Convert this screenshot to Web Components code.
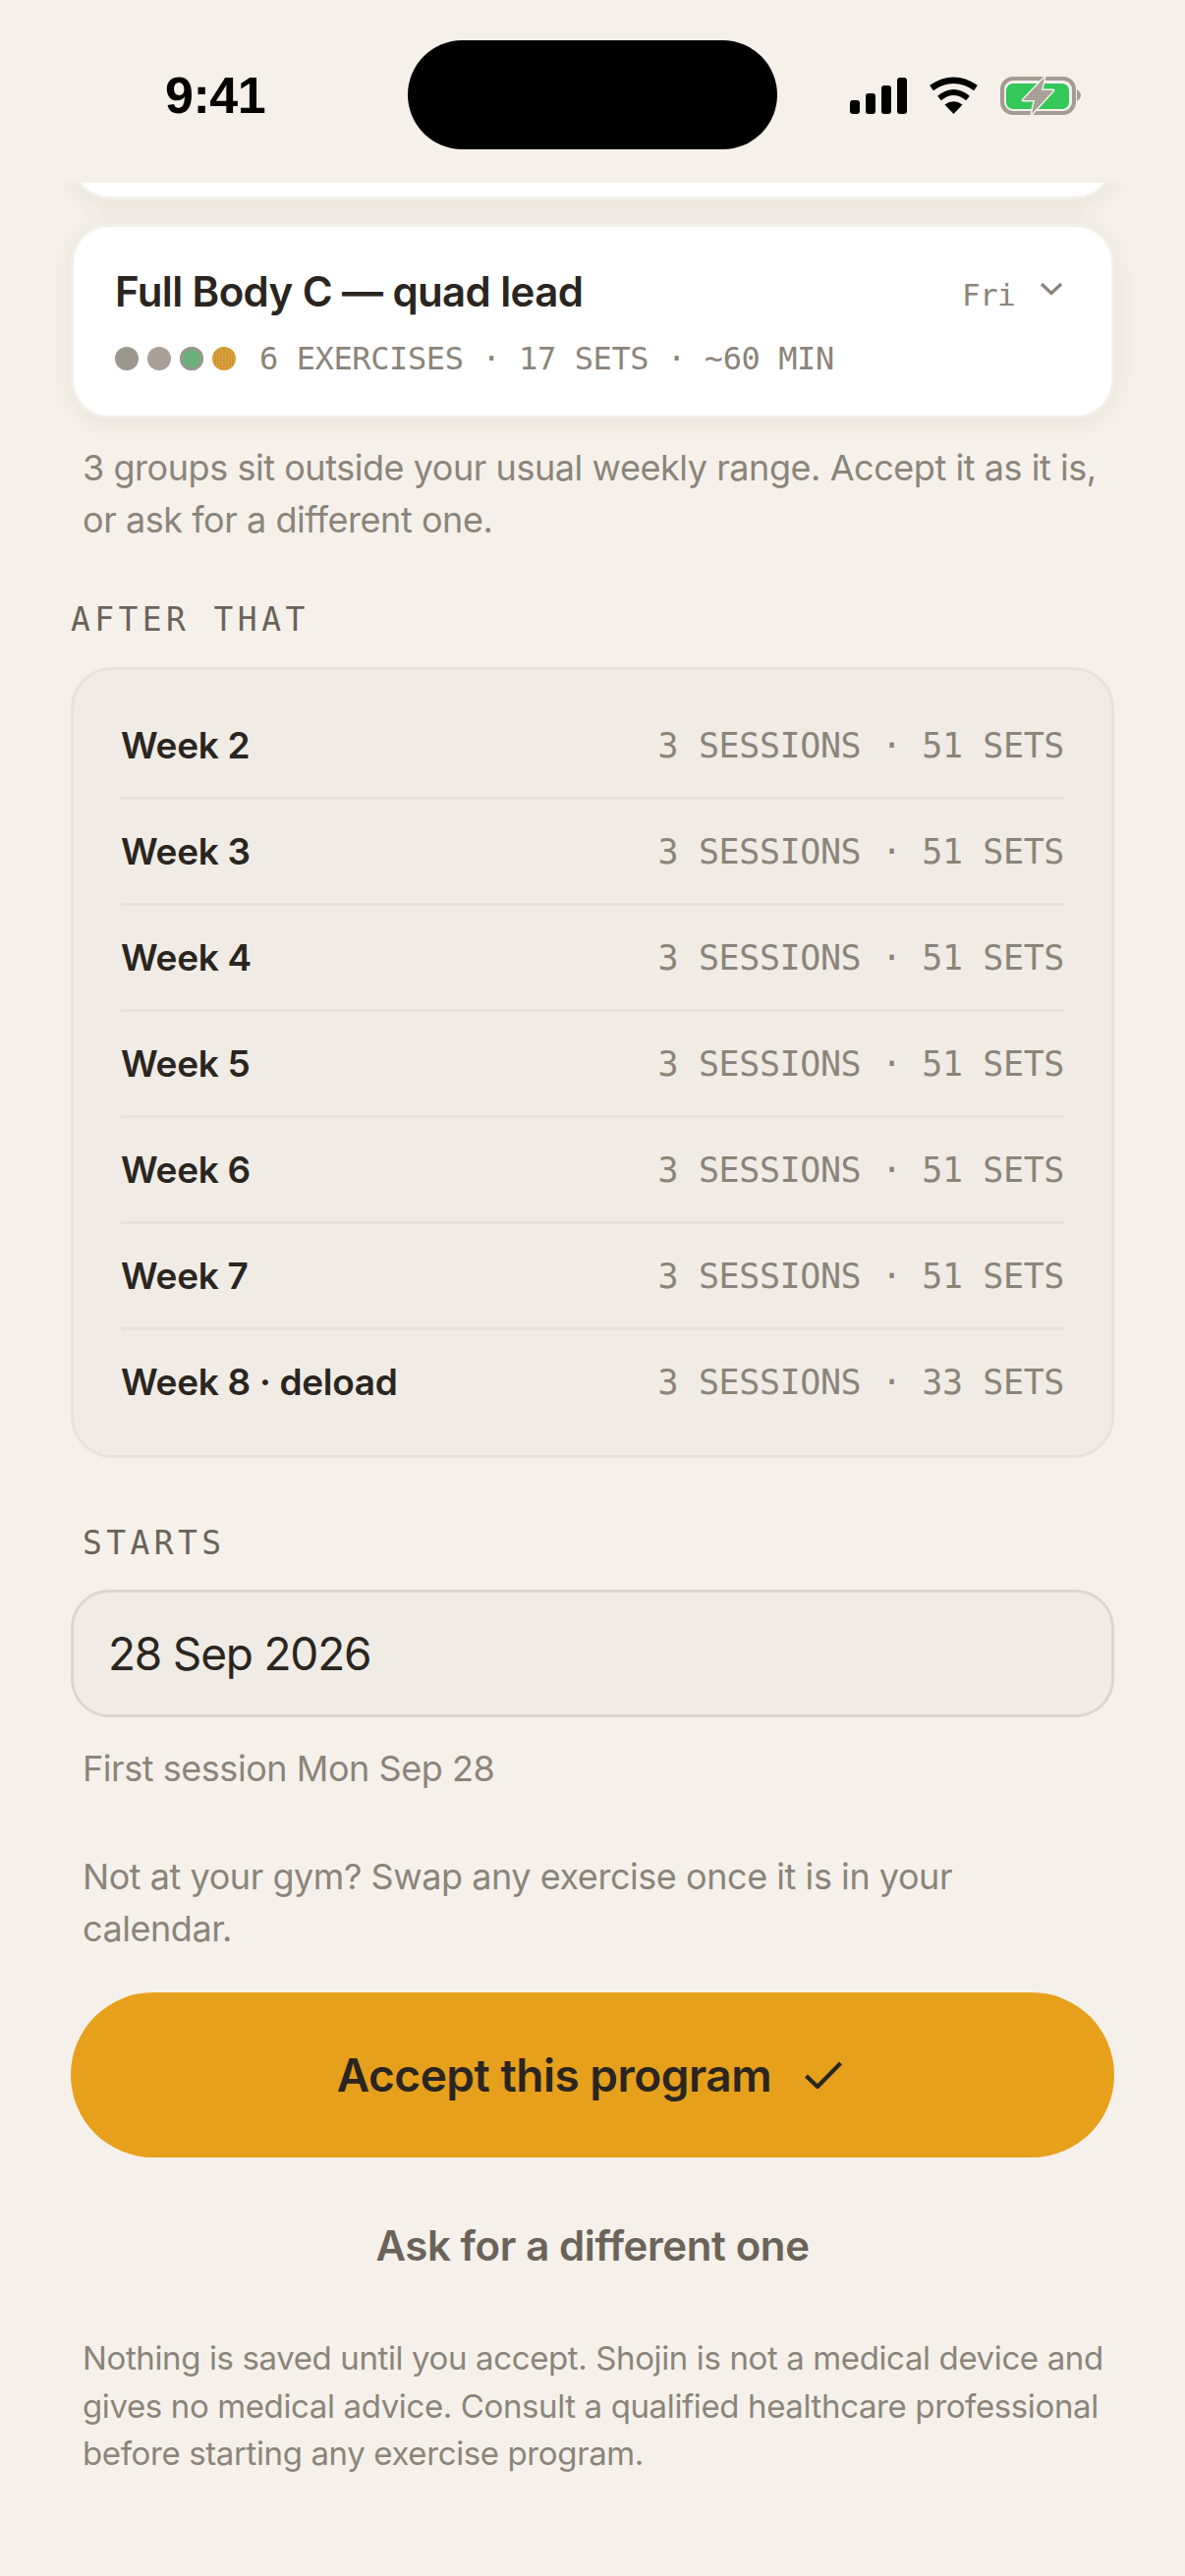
<!DOCTYPE html>
<html lang="en">
<head>
<meta charset="utf-8">
<title>Shojin</title>
<style>
  html, body { margin: 0; padding: 0; background: #f5f1ea; }
  body { width: 1206px; height: 2622px; overflow: hidden; font-family: "Inter", "Liberation Sans", sans-serif; }
</style>
</head>
<body>
<app-screen>
  <status-bar slot="status"></status-bar>

  <plan-card clipped></plan-card>
  <plan-card title="Full Body C — quad lead" day="Fri" meta="6 EXERCISES · 17 SETS · ~60 MIN"></plan-card>

  <note-text style="--mt:24px">3 groups sit outside your usual weekly range. Accept it as it is, or ask for a different one.</note-text>

  <section-label style="--mt:60px">AFTER THAT</section-label>
  <week-panel>
    <week-row name="Week 2" meta="3 SESSIONS · 51 SETS"></week-row>
    <week-row name="Week 3" meta="3 SESSIONS · 51 SETS"></week-row>
    <week-row name="Week 4" meta="3 SESSIONS · 51 SETS"></week-row>
    <week-row name="Week 5" meta="3 SESSIONS · 51 SETS"></week-row>
    <week-row name="Week 6" meta="3 SESSIONS · 51 SETS"></week-row>
    <week-row name="Week 7" meta="3 SESSIONS · 51 SETS"></week-row>
    <week-row name="Week 8 · deload" meta="3 SESSIONS · 33 SETS"></week-row>
  </week-panel>

  <section-label inset style="--mt:72px">STARTS</section-label>
  <date-field value="28 Sep 2026"></date-field>
  <note-text style="--mt:26px">First session Mon Sep 28</note-text>
  <note-text style="--mt:57px">Not at your gym? Swap any exercise once it is in your calendar.</note-text>

  <accept-button>Accept this program</accept-button>
  <ghost-button>Ask for a different one</ghost-button>
  <fine-print>Nothing is saved until you accept. Shojin is not a medical device and gives no medical advice. Consult a qualified healthcare professional before starting any exercise program.</fine-print>
</app-screen>

<script>
const MONO = '"DejaVu Sans Mono", "Liberation Mono", monospace';
const SANS = '"Inter", "Liberation Sans", sans-serif';

class AppScreen extends HTMLElement {
  constructor() {
    super();
    this.attachShadow({ mode: 'open' }).innerHTML = `
      <style>
        :host { display: flex; flex-direction: column; width: 1206px; height: 2622px; background: #f5f1ea; }
        .scroll { flex: 1; overflow: hidden; padding: 0 72px; display: flex; flex-direction: column; }
      </style>
      <slot name="status"></slot>
      <div class="scroll"><slot></slot></div>
    `;
  }
}

class StatusBar extends HTMLElement {
  constructor() {
    super();
    this.attachShadow({ mode: 'open' }).innerHTML = `
      <style>
        :host { display: flex; align-items: flex-start; height: 186px; flex: none; }
        .time { width: 415px; padding: 62px 0 0 168px; box-sizing: border-box; font: 700 52px/70px "Liberation Sans", sans-serif; color: #000; letter-spacing: -0.5px; }
        .island { width: 376px; height: 111px; margin-top: 41px; border-radius: 56px; background: #000; flex: none; }
        .icons { margin: 70px 0 0 69px; width: 245px; height: 56px; flex: none; }
      </style>
      <div class="time">9:41</div>
      <div class="island"></div>
      <svg class="icons" viewBox="860 70 245 56" width="245" height="56">
        <defs>
          <pattern id="dither" width="3" height="3" patternUnits="userSpaceOnUse">
            <rect width="3" height="3" fill="#a39c93"/>
            <rect width="1.5" height="1.5" fill="#b5aea6"/>
          </pattern>
        </defs>
        <rect x="865" y="102" width="10" height="14" rx="3"/>
        <rect x="881" y="95" width="10" height="21" rx="3"/>
        <rect x="897" y="87" width="10" height="29" rx="3"/>
        <rect x="913" y="79" width="10" height="37" rx="3"/>
        <path d="M948 89.500Q970.500 74 993 89.500" fill="none" stroke="#000" stroke-width="6.500"/>
        <path d="M956 100Q970.500 88 985 100" fill="none" stroke="#000" stroke-width="6"/>
        <path d="M970.500 116L961.500 106.500Q970.500 100 979.500 106.500Z"/>
        <rect x="1020" y="80" width="73" height="35" rx="11" fill="none" stroke="#a39c93" stroke-width="4"/>
        <path d="M1096 91Q1100 94 1100 97Q1100 100 1096 103Z" fill="#a39c93"/>
        <rect x="1024" y="85" width="64" height="26" rx="7" fill="#34c759"/>
        <path d="M1063 79L1041 102H1053L1050 116L1072 92H1060Z" fill="url(#dither)" stroke="#f5f1ea" stroke-width="3" stroke-linejoin="round" paint-order="stroke"/>
      </svg>
    `;
  }
}

class PlanCard extends HTMLElement {
  connectedCallback() {
    const title = this.getAttribute('title') || '';
    const day = this.getAttribute('day') || '';
    const meta = this.getAttribute('meta') || '';
    const clipped = this.hasAttribute('clipped');
    this.attachShadow({ mode: 'open' }).innerHTML = `
      <style>
        :host { display: block; flex: none; box-sizing: border-box; height: 198px; background: #fff; border: 3px solid #f3efe9; border-radius: 39px; box-shadow: 0 4px 30px rgba(60, 45, 30, 0.08); }
        :host([clipped]) { height: 197px; margin-top: -180px; margin-bottom: 25px; }
        .top { display: flex; align-items: flex-start; padding: 37px 42px 0; }
        h2 { flex: 1; margin: 0; font: 600 42px/58px ${SANS}; color: #2a2520; letter-spacing: -0.6px; }
        .day { font: 400 31px/58px ${MONO}; color: #8b847a; letter-spacing: -0.66px; margin-top: 3px; }
        .chev { width: 30px; height: 20px; margin: 17px 4px 0 22px; }
        .meta { display: flex; align-items: center; gap: 9px; padding: 19px 42px 0; }
        .dot { width: 24px; height: 24px; border-radius: 50%; background: #9b968e; }
        .dot.b { background: #a8a098; }
        .dot.g { background: repeating-conic-gradient(#45c46a 0 25%, #9b968e 0 50%) 0 0 / 3px 3px; box-shadow: inset 0 0 0 2.500px #9b968e; }
        .dot.a { background: repeating-conic-gradient(#e6a01d 0 25%, #bc9458 0 50%) 0 0 / 3px 3px; }
        .txt { margin-left: 15px; font: 400 32px/34px ${MONO}; color: #8b847a; letter-spacing: -0.4px; white-space: nowrap; }
      </style>
      ${clipped ? '' : `
      <div class="top">
        <h2>${title}</h2>
        <span class="day">${day}</span>
        <svg class="chev" viewBox="0 0 30 20"><path d="M5 4L15 13.500L25 4" fill="none" stroke="#8b847a" stroke-width="3.200"/></svg>
      </div>
      <div class="meta">
        <span class="dot"></span><span class="dot b"></span><span class="dot g"></span><span class="dot a"></span>
        <span class="txt">${meta}</span>
      </div>`}
    `;
  }
}

class NoteText extends HTMLElement {
  constructor() {
    super();
    this.attachShadow({ mode: 'open' }).innerHTML = `
      <style>
        :host { display: block; flex: none; margin-top: var(--mt, 0); padding: 0 10px 0 12px; font: 400 36px/53px ${SANS}; color: #8b847a; letter-spacing: -0.45px; }
      </style>
      <slot></slot>
    `;
  }
}

class SectionLabel extends HTMLElement {
  constructor() {
    super();
    this.attachShadow({ mode: 'open' }).innerHTML = `
      <style>
        :host { display: block; flex: none; margin-top: var(--mt, 0); font: 400 33px/30px ${MONO}; letter-spacing: 4.400px; color: #6b635a; }
        :host([inset]) { padding-left: 12px; }
      </style>
      <slot></slot>
    `;
  }
}

class WeekPanel extends HTMLElement {
  constructor() {
    super();
    this.attachShadow({ mode: 'open' }).innerHTML = `
      <style>
        :host { display: block; flex: none; margin-top: 33px; padding: 24px 48px 22px; background: #f0ece5; border: 3px solid #e7e3db; border-radius: 42px; }
      </style>
      <slot></slot>
    `;
  }
}

class WeekRow extends HTMLElement {
  connectedCallback() {
    this.attachShadow({ mode: 'open' }).innerHTML = `
      <style>
        :host { display: flex; justify-content: space-between; align-items: center; height: 105px; border-bottom: 3px solid #e6e2da; }
        :host(:last-child) { border-bottom: 0; }
        .name { font: 600 37px/50px ${SANS}; color: #2a2520; letter-spacing: -0.3px; }
        .meta { font: 400 35px/40px ${MONO}; color: #8b847a; letter-spacing: -0.4px; white-space: nowrap; }
      </style>
      <span class="name">${this.getAttribute('name')}</span>
      <span class="meta">${this.getAttribute('meta')}</span>
    `;
  }
}

class DateField extends HTMLElement {
  connectedCallback() {
    this.attachShadow({ mode: 'open' }).innerHTML = `
      <style>
        :host { display: flex; flex: none; align-items: center; box-sizing: border-box; height: 130px; margin-top: 32px; padding: 0 35px; background: #f0ece5; border: 3px solid #dbd6ce; border-radius: 39px; font: 400 46px/60px ${SANS}; color: #2a2520; letter-spacing: -1.200px; }
      </style>
      ${this.getAttribute('value')}
    `;
  }
}

class AcceptButton extends HTMLElement {
  constructor() {
    super();
    this.attachShadow({ mode: 'open' }).innerHTML = `
      <style>
        :host { display: flex; flex: none; align-items: center; justify-content: center; gap: 34px; height: 168px; margin-top: 38px; background: #e7a01c; border-radius: 84px; font: 600 46px/60px ${SANS}; color: #2a2520; letter-spacing: -0.5px; }
        svg { width: 38px; height: 28px; margin-right: 6px; }
      </style>
      <slot></slot>
      <svg viewBox="0 0 38 28"><path d="M1.500 15L13 26L36.500 2" fill="none" stroke="#2a2520" stroke-width="4.200"/></svg>
    `;
  }
}

class GhostButton extends HTMLElement {
  constructor() {
    super();
    this.attachShadow({ mode: 'open' }).innerHTML = `
      <style>
        :host { display: block; flex: none; margin-top: 62px; text-align: center; font: 600 42px/56px ${SANS}; color: #6b635a; letter-spacing: -0.4px; }
      </style>
      <slot></slot>
    `;
  }
}

class FinePrint extends HTMLElement {
  constructor() {
    super();
    this.attachShadow({ mode: 'open' }).innerHTML = `
      <style>
        :host { display: block; flex: none; margin-top: 62px; padding: 0 0 0 12px; font: 400 33px/48.500px ${SANS}; color: #8b847a; letter-spacing: -0.38px; }
      </style>
      <slot></slot>
    `;
  }
}

customElements.define('app-screen', AppScreen);
customElements.define('status-bar', StatusBar);
customElements.define('plan-card', PlanCard);
customElements.define('note-text', NoteText);
customElements.define('section-label', SectionLabel);
customElements.define('week-panel', WeekPanel);
customElements.define('week-row', WeekRow);
customElements.define('date-field', DateField);
customElements.define('accept-button', AcceptButton);
customElements.define('ghost-button', GhostButton);
customElements.define('fine-print', FinePrint);
</script>
</body>
</html>
